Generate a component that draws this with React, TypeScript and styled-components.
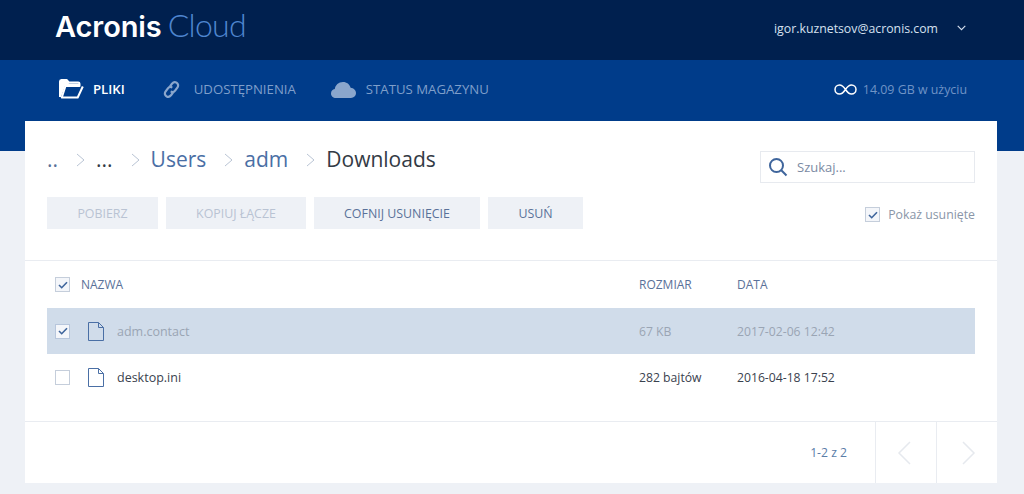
import React from "react";
import styled, { createGlobalStyle } from "styled-components";

const GlobalStyle = createGlobalStyle`
  html, body {
    margin: 0;
    padding: 0;
    height: 100%;
    background: #eef1f6;
    font-family: "Open Sans", "Liberation Sans", sans-serif;
  }
  * {
    box-sizing: border-box;
  }
`;

const Page = styled.div`
  width: 1024px;
  height: 494px;
  overflow: hidden;
  background: #eef1f6;
`;

const TopBar = styled.header`
  height: 60px;
  background: #00204f;
  display: flex;
  align-items: center;
  justify-content: space-between;
  padding: 0 58px 4px 55px;
`;

const Logo = styled.div`
  display: flex;
  align-items: baseline;
  gap: 6px;
  margin-bottom: 5px;
  line-height: 36px;
`;

const LogoBrand = styled.span`
  font-family: "Inter", sans-serif;
  font-weight: 600;
  font-size: 29px;
  letter-spacing: -0.1px;
  color: #ffffff;
`;

const LogoProduct = styled.span`
  font-family: "Lato", sans-serif;
  font-weight: 300;
  font-size: 32px;
  letter-spacing: -0.7px;
  color: #4f86cf;
`;

const UserMenu = styled.div`
  display: flex;
  align-items: center;
  gap: 19px;
  font-size: 12.3px;
  color: #d6e0ef;
`;

const NavBar = styled.nav`
  height: 91px;
  background: #003c8a;
  display: flex;
  align-items: flex-start;
  justify-content: space-between;
  padding: 19px 57px 0 59px;
`;

const NavTabs = styled.div`
  display: flex;
  align-items: center;
  gap: 35px;
`;

const NavTab = styled.div<{ $active?: boolean }>`
  display: flex;
  align-items: center;
  gap: 9px;
  height: 20px;
  font-size: 13.2px;
  font-weight: ${(p) => (p.$active ? 600 : 400)};
  color: ${(p) => (p.$active ? "#ffffff" : "#7f9fca")};
  svg {
    color: ${(p) => (p.$active ? "#ffffff" : "#8aa6cc")};
  }
`;

const Storage = styled.div`
  display: flex;
  align-items: center;
  gap: 6px;
  height: 20px;
  font-size: 12.4px;
  color: #6f93c6;
`;

const Card = styled.main`
  width: 972px;
  height: 362px;
  margin: -30px 0 0 25px;
  background: #ffffff;
  display: flex;
  flex-direction: column;
`;

const Toolbar = styled.section`
  height: 140px;
  padding: 0 22px;
  display: flex;
  justify-content: space-between;
  border-bottom: 1px solid #e9ecf1;
`;

const ToolbarLeft = styled.div`
  display: flex;
  flex-direction: column;
`;

const Breadcrumbs = styled.div`
  height: 76px;
  padding-top: 21px;
  display: flex;
  align-items: flex-start;
  font-size: 21px;
  line-height: 34px;
`;

const Crumb = styled.span<{ $tone: "dark" | "link" | "muted" }>`
  color: ${(p) =>
    p.$tone === "link" ? "#4a6fa5" : p.$tone === "muted" ? "#5a7199" : "#333a45"};
`;

const CrumbArrow = styled.svg`
  width: 9px;
  height: 14px;
  margin: 11px 11px 0 18px;
  flex: none;
`;

const Actions = styled.div`
  display: flex;
  gap: 8px;
`;

const ActionButton = styled.button<{ $width: number }>`
  width: ${(p) => p.$width}px;
  height: 32px;
  border: 0;
  padding: 0;
  background: #eef1f6;
  font-family: inherit;
  font-size: 12.4px;
  color: ${(p) => (p.disabled ? "#b9c3d3" : "#5a7199")};
`;

const ToolbarRight = styled.div`
  width: 215px;
  padding-top: 30px;
  display: flex;
  flex-direction: column;
  align-items: flex-end;
`;

const SearchBox = styled.div`
  width: 215px;
  height: 32px;
  border: 1px solid #e7eaef;
  display: flex;
  align-items: center;
  gap: 9px;
  padding-left: 7px;
  font-size: 13px;
  color: #7b8aa3;
`;

const ShowDeleted = styled.div`
  margin-top: 23px;
  display: flex;
  align-items: center;
  gap: 8px;
  font-size: 12.3px;
  color: #8a96a8;
`;

const CheckBox = styled.span<{ $checked?: boolean; $onDark?: boolean }>`
  width: 15px;
  height: 15px;
  flex: none;
  display: flex;
  align-items: center;
  justify-content: center;
  background: ${(p) => (p.$onDark || p.$checked ? "#f4f6fa" : "#ffffff")};
  border: 1px solid ${(p) => (p.$onDark ? "#b7c6dc" : "#c5cedb")};
`;

const Table = styled.section`
  padding: 0 22px;
  height: 161px;
  border-bottom: 1px solid #e9ecf1;
`;

const Row = styled.div<{ $height: number; $selected?: boolean }>`
  height: ${(p) => p.$height}px;
  display: grid;
  grid-template-columns: 592px 98px 1fr;
  align-items: center;
  background: ${(p) => (p.$selected ? "#d0dcea" : "transparent")};
  color: ${(p) => (p.$selected ? "#9aa5b4" : "#3a424e")};
  font-size: 12.5px;
`;

const HeaderRow = styled(Row)`
  color: #5a7199;
  font-size: 12px;
`;

const NameCell = styled.div`
  display: flex;
  align-items: center;
  padding-left: 8px;
`;

const MetaCell = styled.span`
  font-size: 12.2px;
`;

const FileName = styled.span`
  margin-left: 13px;
`;

const FileGlyph = styled.svg`
  margin-left: 18px;
  flex: none;
`;

const HeaderLabel = styled.span`
  margin-left: 11px;
`;

const Footer = styled.footer`
  flex: 1;
  display: flex;
  justify-content: flex-end;
  align-items: stretch;
`;

const PageCount = styled.div`
  display: flex;
  align-items: center;
  padding-right: 28px;
  font-size: 12.2px;
  color: #5a7da8;
`;

const PagerButton = styled.div<{ $side: "prev" | "next" }>`
  width: 61px;
  border-left: 1px solid #e9ecf1;
  display: flex;
  align-items: center;
  justify-content: center;
  padding: ${(p) => (p.$side === "prev" ? "0 4px 0 0" : "0 0 0 4px")};
`;

const Check = () => (
  <svg width="10" height="8" viewBox="0 0 10 8" fill="none">
    <path d="M1 4l2.7 2.7L9 1.2" stroke="#3f659c" strokeWidth="1.6" />
  </svg>
);

const Arrow = () => (
  <CrumbArrow viewBox="0 0 9 14" fill="none">
    <path d="M1 1l7 6-7 6" stroke="#b9c4d4" strokeWidth="1" />
  </CrumbArrow>
);

const FileIcon = () => (
  <FileGlyph width="16" height="19" viewBox="0 0 16 19" fill="none">
    <path
      d="M.5.5h10l5 5v13H.5zM10.500.5v5h5"
      stroke="#4a6fa5"
      strokeWidth="1"
      strokeLinejoin="round"
    />
  </FileGlyph>
);

export default function App() {
  return (
    <Page>
      <GlobalStyle />
      <TopBar>
        <Logo>
          <LogoBrand>Acronis</LogoBrand>
          <LogoProduct>Cloud</LogoProduct>
        </Logo>
        <UserMenu>
          igor.kuznetsov@acronis.com
          <svg width="9" height="6" viewBox="0 0 9 6" fill="none">
            <path d="M.7.8l3.800 3.800L8.300.8" stroke="#d6e0ef" strokeWidth="1.1" />
          </svg>
        </UserMenu>
      </TopBar>
      <NavBar>
        <NavTabs>
          <NavTab $active>
            <svg width="25" height="20" viewBox="0 0 25 20" fill="none">
              <path
                d="M1 18V2.500C1 1.700 1.600 1 2.400 1h5.200l2.200 2.500h9.400c.8 0 1.300.6 1.300 1.300V7H6.500L2.800 18.500h15.900L23.800 7.500"
                stroke="currentColor"
                strokeWidth="2"
                strokeLinejoin="round"
              />
              <path d="M1 2h7l2 2.500h10V7H6L2 18H1z" fill="currentColor" />
            </svg>
            PLIKI
          </NavTab>
          <NavTab>
            <svg width="25" height="19" viewBox="-2 0 25 19" fill="none">
              <g stroke="currentColor" strokeWidth="2.200">
                <path d="M8 6.500l2-2.800c1.300-1.600 3-2 4.500-1 1.700 1.100 2.100 3 1 4.600l-2.400 3.300c-1.100 1.500-2.900 1.700-4.400.8" />
                <path d="M11 12.500l-2 2.800c-1.300 1.600-3 2-4.500 1-1.700-1.100-2.100-3-1-4.600l2.400-3.300c1.100-1.500 2.900-1.700 4.400-.8" />
              </g>
            </svg>
            UDOSTĘPNIENIA
          </NavTab>
          <NavTab>
            <svg width="26" height="17" viewBox="0 0 26 17">
              <path
                d="M5 17C2 17 0 15 0 12.400c0-2.300 1.500-4 3.800-4.400C4.300 4.300 7.500 1 12 1c3.800 0 6.800 2.400 7.600 5.800 3 .2 5.400 2.400 5.400 5.300 0 2.800-2.200 4.900-5 4.900z"
                fill="currentColor"
              />
            </svg>
            STATUS MAGAZYNU
          </NavTab>
        </NavTabs>
        <Storage>
          <svg width="23" height="11" viewBox="0 0 23 11" fill="none">
            <path
              d="M11.500 5.500C9.500 2.500 8 1 5.500 1a4.500 4.500 0 000 9c2.500 0 4-1.500 6-4.500s3.500-4.500 6-4.500a4.500 4.500 0 010 9c-2.500 0-4-1.500-6-4.500z"
              stroke="#ffffff"
              strokeWidth="1.500"
            />
          </svg>
          14.09 GB w użyciu
        </Storage>
      </NavBar>
      <Card>
        <Toolbar>
          <ToolbarLeft>
            <Breadcrumbs>
              <Crumb $tone="muted">..</Crumb>
              <Arrow />
              <Crumb $tone="dark">...</Crumb>
              <Arrow />
              <Crumb $tone="link">Users</Crumb>
              <Arrow />
              <Crumb $tone="link">adm</Crumb>
              <Arrow />
              <Crumb $tone="dark">Downloads</Crumb>
            </Breadcrumbs>
            <Actions>
              <ActionButton $width={111} disabled>
                POBIERZ
              </ActionButton>
              <ActionButton $width={140} disabled>
                KOPIUJ ŁĄCZE
              </ActionButton>
              <ActionButton $width={166}>COFNIJ USUNIĘCIE</ActionButton>
              <ActionButton $width={95}>USUŃ</ActionButton>
            </Actions>
          </ToolbarLeft>
          <ToolbarRight>
            <SearchBox>
              <svg width="20" height="20" viewBox="0 0 20 20" fill="none">
                <circle cx="8.500" cy="8.500" r="6.500" stroke="#3f659c" strokeWidth="2" />
                <path d="M13.300 13.300l5.200 5.200" stroke="#3f659c" strokeWidth="2" />
              </svg>
              Szukaj...
            </SearchBox>
            <ShowDeleted>
              <CheckBox $checked>
                <Check />
              </CheckBox>
              Pokaż usunięte
            </ShowDeleted>
          </ToolbarRight>
        </Toolbar>
        <Table>
          <HeaderRow $height={47}>
            <NameCell>
              <CheckBox $checked>
                <Check />
              </CheckBox>
              <HeaderLabel>NAZWA</HeaderLabel>
            </NameCell>
            <span>ROZMIAR</span>
            <span>DATA</span>
          </HeaderRow>
          <Row $height={46} $selected>
            <NameCell>
              <CheckBox $checked $onDark>
                <Check />
              </CheckBox>
              <FileIcon />
              <FileName>adm.contact</FileName>
            </NameCell>
            <MetaCell>67 KB</MetaCell>
            <MetaCell>2017-02-06 12:42</MetaCell>
          </Row>
          <Row $height={46}>
            <NameCell>
              <CheckBox />
              <FileIcon />
              <FileName>desktop.ini</FileName>
            </NameCell>
            <MetaCell>282 bajtów</MetaCell>
            <MetaCell>2016-04-18 17:52</MetaCell>
          </Row>
        </Table>
        <Footer>
          <PageCount>1-2 z 2</PageCount>
          <PagerButton $side="prev">
            <svg width="14" height="24" viewBox="0 0 14 24" fill="none">
              <path d="M13 1L2 12l11 11" stroke="#e6e9ee" strokeWidth="1.500" />
            </svg>
          </PagerButton>
          <PagerButton $side="next">
            <svg width="14" height="24" viewBox="0 0 14 24" fill="none">
              <path d="M1 1l11 11L1 23" stroke="#e6e9ee" strokeWidth="1.500" />
            </svg>
          </PagerButton>
        </Footer>
      </Card>
    </Page>
  );
}
